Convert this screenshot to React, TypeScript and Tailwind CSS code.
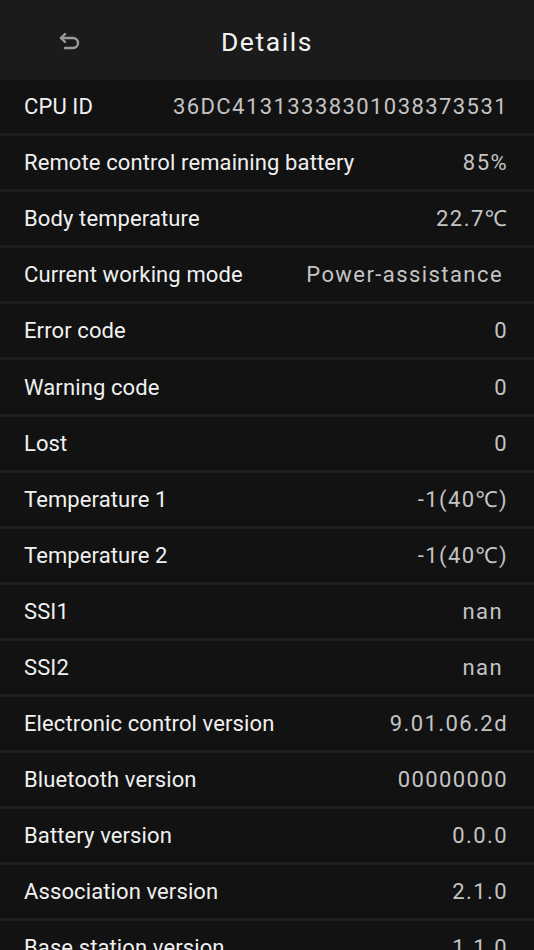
const rows: { label: string; value: string; pr?: string }[] = [
  { label: 'CPU ID', value: '36DC41313338301038373531' },
  { label: 'Remote control remaining battery', value: '85%' },
  { label: 'Body temperature', value: '22.7℃' },
  { label: 'Current working mode', value: 'Power-assistance', pr: 'pr-[31px]' },
  { label: 'Error code', value: '0' },
  { label: 'Warning code', value: '0' },
  { label: 'Lost', value: '0' },
  { label: 'Temperature 1', value: '-1(40℃)' },
  { label: 'Temperature 2', value: '-1(40℃)' },
  { label: 'SSI1', value: 'nan', pr: 'pr-[31px]' },
  { label: 'SSI2', value: 'nan', pr: 'pr-[31px]' },
  { label: 'Electronic control version', value: '9.01.06.2d' },
  { label: 'Bluetooth version', value: '00000000' },
  { label: 'Battery version', value: '0.0.0' },
  { label: 'Association version', value: '2.1.0' },
  { label: 'Base station version', value: '1.1.0' },
];

function BackIcon() {
  return (
    <svg width="26" height="20" viewBox="0 0 26 20" fill="none" stroke="#9a9a9a" strokeWidth="2.4" strokeLinecap="round" strokeLinejoin="round">
      <path d="M4 5h12a5 5 0 0 1 0 10H8" />
      <path d="M8 1 4 5l4 4" />
    </svg>
  );
}

export default function App() {
  return (
    <div
      className="h-[950px] w-[534px] overflow-hidden bg-[#121212]"
      style={{ fontFamily: 'Roboto, "Noto Sans", sans-serif' }}
    >
      <header className="relative flex h-[80px] items-center justify-center bg-[#1b1b1b] pt-1">
        <span className="absolute left-[57px] top-[33px]">
          <BackIcon />
        </span>
        <h1 className="text-[26.5px] font-normal tracking-[0.06em] text-[#f2f2f2]">Details</h1>
      </header>
      <ul>
        {rows.map((row) => (
          <li
            key={row.label}
            className={`flex h-[56.1px] items-center justify-between border-b-[3px] border-[#1e1e1e] pl-[24px] ${row.pr ?? 'pr-[26px]'}`}
          >
            <span className="whitespace-nowrap text-[22px] tracking-[0.005em] text-[#f0f0f0]">{row.label}</span>
            <span className="whitespace-nowrap text-[22px] tracking-[0.065em] text-[#c4c4c4]">{row.value}</span>
          </li>
        ))}
      </ul>
    </div>
  );
}
